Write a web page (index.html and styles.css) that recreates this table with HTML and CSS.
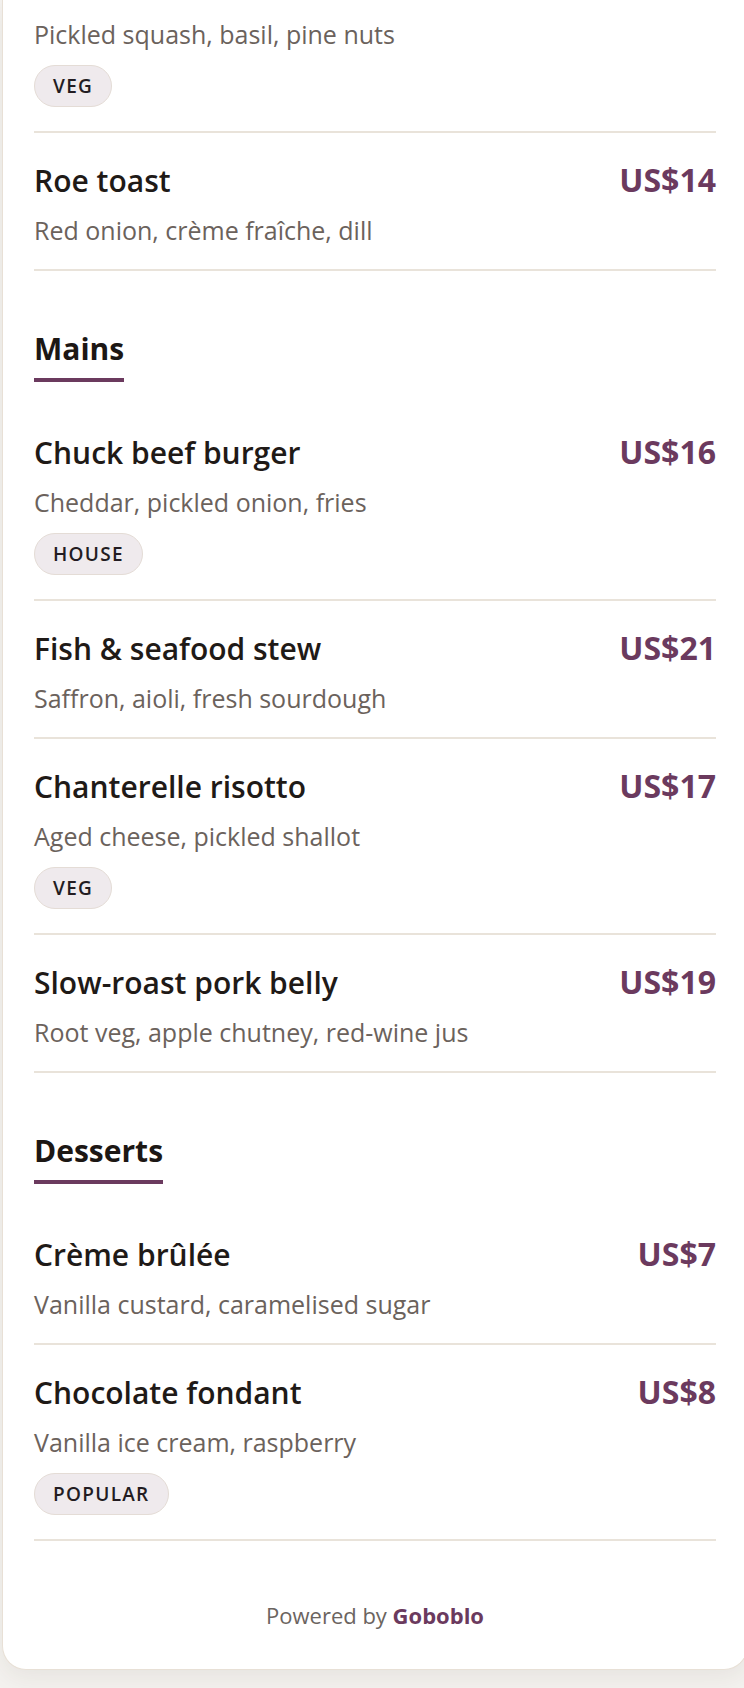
FILE: index.html
```html
<!DOCTYPE html>
<html lang="en">

<head>
    <meta charset="UTF-8">
    <meta name="viewport" content="width=device-width, initial-scale=1.0">
    <title>Menu</title>
    <link rel="stylesheet" href="styles.css">
</head>

<body>

    <div class="page">
        <main class="menu-card">

            <!-- tail of the starters list (scrolled) -->
            <div class="menu-item menu-item-cut">
                <p class="item-desc">Pickled squash, basil, pine nuts</p>
                <div class="item-tags"><span class="tag">VEG</span></div>
            </div>
            <div class="menu-item">
                <div class="item-head">
                    <h4 class="item-name">Roe toast</h4>
                    <span class="item-price">US$14</span>
                </div>
                <p class="item-desc">Red onion, crème fraîche, dill</p>
            </div>

            <!-- Mains -->
            <section class="menu-section">
                <h3 class="section-title">Mains</h3>
                <div class="menu-item">
                    <div class="item-head">
                        <h4 class="item-name">Chuck beef burger</h4>
                        <span class="item-price">US$16</span>
                    </div>
                    <p class="item-desc">Cheddar, pickled onion, fries</p>
                    <div class="item-tags"><span class="tag">HOUSE</span></div>
                </div>
                <div class="menu-item">
                    <div class="item-head">
                        <h4 class="item-name">Fish &amp; seafood stew</h4>
                        <span class="item-price">US$21</span>
                    </div>
                    <p class="item-desc">Saffron, aioli, fresh sourdough</p>
                </div>
                <div class="menu-item">
                    <div class="item-head">
                        <h4 class="item-name">Chanterelle risotto</h4>
                        <span class="item-price">US$17</span>
                    </div>
                    <p class="item-desc">Aged cheese, pickled shallot</p>
                    <div class="item-tags"><span class="tag">VEG</span></div>
                </div>
                <div class="menu-item">
                    <div class="item-head">
                        <h4 class="item-name">Slow-roast pork belly</h4>
                        <span class="item-price">US$19</span>
                    </div>
                    <p class="item-desc">Root veg, apple chutney, red-wine jus</p>
                </div>
            </section>

            <!-- Desserts -->
            <section class="menu-section">
                <h3 class="section-title">Desserts</h3>
                <div class="menu-item">
                    <div class="item-head">
                        <h4 class="item-name">Crème brûlée</h4>
                        <span class="item-price">US$7</span>
                    </div>
                    <p class="item-desc">Vanilla custard, caramelised sugar</p>
                </div>
                <div class="menu-item">
                    <div class="item-head">
                        <h4 class="item-name">Chocolate fondant</h4>
                        <span class="item-price">US$8</span>
                    </div>
                    <p class="item-desc">Vanilla ice cream, raspberry</p>
                    <div class="item-tags"><span class="tag">POPULAR</span></div>
                </div>
            </section>

            <footer class="powered">Powered by <strong>Goboblo</strong></footer>
        </main>
    </div>

</body>

</html>
```

FILE: styles.css
```css
html,
body {
    overflow-x: hidden;
}

body {
    font-family: "Open Sans", "Noto Sans", Arial, sans-serif;
    margin: 0;
    padding: 0;
    background-color: #f4f2ef;
    color: #1f1a17;
}

.page {
    padding: 0 0 18px 2px;
}

.menu-card {
    width: 746px;
    box-sizing: border-box;
    background: #fff;
    border: 1px solid #e8e0d6;
    border-top: none;
    border-radius: 0 0 24px 24px;
    box-shadow: 0 8px 24px rgba(60, 40, 30, 0.07);
    padding: 0 31px 40px;
}

.menu-item {
    padding: 27px 0 21px;
    border-bottom: 2px solid #e9e3da;
}

.menu-item-cut {
    padding-top: 16px;
}

.item-head {
    display: flex;
    justify-content: space-between;
    align-items: baseline;
    gap: 16px;
}

.item-name {
    margin: 0;
    font-size: 30px;
    line-height: 40px;
    font-weight: 600;
    color: #1f1a17;
}

.item-price {
    font-size: 32px;
    line-height: 40px;
    font-weight: 700;
    color: #6b3a5e;
    white-space: nowrap;
}

.item-desc {
    margin: 11px 0 0;
    font-size: 25px;
    line-height: 36px;
    color: #6b625c;
}

.menu-item-cut .item-desc {
    margin-top: 0;
}

.item-tags {
    display: flex;
    gap: 8px;
    margin: 13px 0 3px;
}

.tag {
    display: inline-flex;
    align-items: center;
    height: 42px;
    box-sizing: border-box;
    padding: 0 18px;
    border-radius: 999px;
    background: #efeaed;
    border: 1px solid #e4dcd6;
    font-size: 19px;
    font-weight: 600;
    letter-spacing: 1.3px;
    color: #231c22;
}

.menu-section {
    margin-top: 58px;
}

.section-title {
    display: inline-block;
    margin: 0 0 23px;
    padding-bottom: 9px;
    border-bottom: 4px solid #6b3a5e;
    font-size: 30px;
    line-height: 40px;
    font-weight: 700;
    color: #1c1714;
}

.powered {
    padding-top: 60px;
    text-align: center;
    font-size: 22px;
    line-height: 28px;
    color: #6b6460;
}

.powered strong {
    color: #6b3a5e;
    font-weight: 700;
}
```
